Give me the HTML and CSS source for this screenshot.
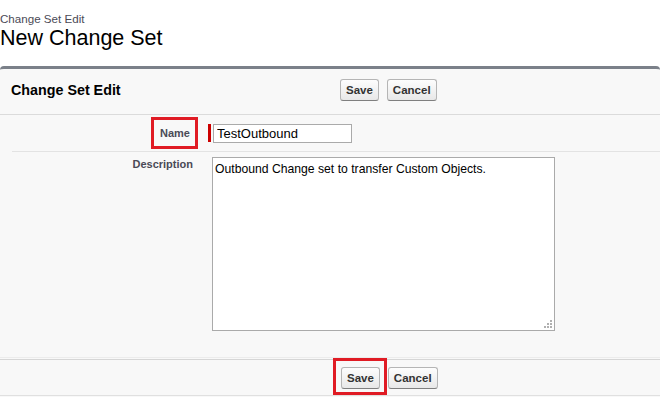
FILE: index.html
```html
<!DOCTYPE html>
<html>
<head>
<meta charset="utf-8">
<link rel="stylesheet" href="styles.css">
</head>
<body>
<div class="page-head">
  <div class="crumb">Change Set Edit</div>
  <h1 class="title">New Change Set</h1>
</div>
<div class="panel">
  <div class="panel-head">
    <div class="panel-title">Change Set Edit</div>
    <div class="btns">
      <button class="btn">Save</button>
      <button class="btn">Cancel</button>
    </div>
  </div>
  <div class="body">
    <div class="row row-name">
      <div class="label"><span class="mark">Name</span></div>
      <div class="data">
        <span class="req"></span>
        <input class="input" type="text" value="TestOutbound">
      </div>
    </div>
    <div class="row row-desc">
      <div class="label">Description</div>
      <div class="data">
        <div class="area-wrap">
          <textarea class="area">Outbound Change set to transfer Custom Objects.</textarea>
          <svg class="grip" width="8" height="8" viewBox="0 0 8 8">
            <rect x="6" y="0" width="2" height="2" fill="#b0b0b0"/>
            <rect x="3" y="3" width="2" height="2" fill="#b0b0b0"/>
            <rect x="6" y="3" width="2" height="2" fill="#b0b0b0"/>
            <rect x="0" y="6" width="2" height="2" fill="#b0b0b0"/>
            <rect x="3" y="6" width="2" height="2" fill="#b0b0b0"/>
            <rect x="6" y="6" width="2" height="2" fill="#b0b0b0"/>
          </svg>
        </div>
      </div>
    </div>
  </div>
  <div class="panel-foot">
    <div class="btns">
      <span class="mark-btn"><button class="btn">Save</button></span>
      <button class="btn">Cancel</button>
    </div>
  </div>
</div>
</body>
</html>
```
FILE: styles.css
```css
html, body {
  margin: 0;
  padding: 0;
  background: #fff;
  font-family: "Liberation Sans", Arial, sans-serif;
  overflow: hidden;
}
.page-head {
  padding-top: 12px;
  height: 66px;
  box-sizing: border-box;
}
.crumb {
  font-size: 11.6px;
  line-height: 14px;
  color: #4a4a56;
}
.title {
  margin: 0;
  font-size: 21.5px;
  font-weight: normal;
  line-height: 25px;
  color: #000;
}
.panel {
  border-top: 3px solid #7b8089;
  border-radius: 4px 4px 0 0;
  background: #f8f8f8;
  height: 340px;
}
.panel-head {
  display: flex;
  align-items: center;
  height: 45px;
  box-sizing: border-box;
  padding-bottom: 4px;
  height: 46px;
  border-bottom: 1px solid #dbdbdb;
}
.panel-title {
  width: 340px;
  box-sizing: border-box;
  padding-left: 11px;
  font-size: 14.3px;
  font-weight: bold;
  color: #000;
}
.btns {
  display: flex;
  gap: 8px;
  align-items: center;
}
.btn {
  font-family: "Liberation Sans", Arial, sans-serif;
  font-size: 11.5px;
  font-weight: bold;
  color: #333;
  height: 22px;
  padding: 0 5px;
  border: 1px solid #b5b5b5;
  border-bottom-color: #7f7f7f;
  border-radius: 3px;
  background: linear-gradient(#fdfdfd, #e8e8e8);
  margin: 0;
}
.body {
  padding-left: 12px;
}
.row {
  display: flex;
  border-bottom: 1px solid #e3e3e3;
}
.row-name {
  height: 36px;
  align-items: center;
}
.row-desc {
  border-bottom: none;
  padding-top: 5px;
  height: 200px;
}
.label {
  width: 181px;
  text-align: right;
  font-size: 11px;
  font-weight: bold;
  color: #4a4a56;
  box-sizing: border-box;
}
.row-desc .label {
  padding-top: 1px;
}
.mark {
  display: inline-block;
  outline: 3px solid #e01b24;
  padding: 7px 5px 7px 6px;
  margin-right: -2px;
}
.data {
  display: flex;
  align-items: center;
  padding-left: 15px;
}
.row-desc .data {
  align-items: flex-start;
  padding-left: 19px;
}
.req {
  width: 3px;
  height: 18px;
  background: #c00;
  margin-right: 2px;
}
.input {
  width: 139px;
  height: 19px;
  box-sizing: border-box;
  border: 1px solid #aaa;
  padding: 1px 3px;
  font-family: "Liberation Sans", Arial, sans-serif;
  font-size: 13px;
  color: #000;
  background: #fff;
}
.area-wrap {
  position: relative;
  line-height: 0;
}
.area {
  display: block;
  width: 343px;
  height: 174px;
  box-sizing: border-box;
  border: 1px solid #aaa;
  padding: 4px 2px;
  font-family: "Liberation Sans", Arial, sans-serif;
  font-size: 12.2px;
  line-height: normal;
  color: #000;
  background: #fff;
  margin: 0;
  resize: none;
}
.grip {
  position: absolute;
  right: 3px;
  bottom: 3px;
}
.panel-foot {
  border-top: 1px solid #ececec;
  box-shadow: inset 0 1px 0 #f8f8f8, inset 0 2px 0 #d6d6d6;
  padding-top: 2px;
  padding-left: 341px;
  height: 39px;
  border-bottom: 1px solid #e0e0e0;
  display: flex;
  align-items: center;
  box-sizing: border-box;
}
.mark-btn {
  display: inline-block;
  outline: 3px solid #e01b24;
  padding: 6px 4px 3px 5px;
  margin: -6px -4px -3px -5px;
  line-height: 0;
}
```
